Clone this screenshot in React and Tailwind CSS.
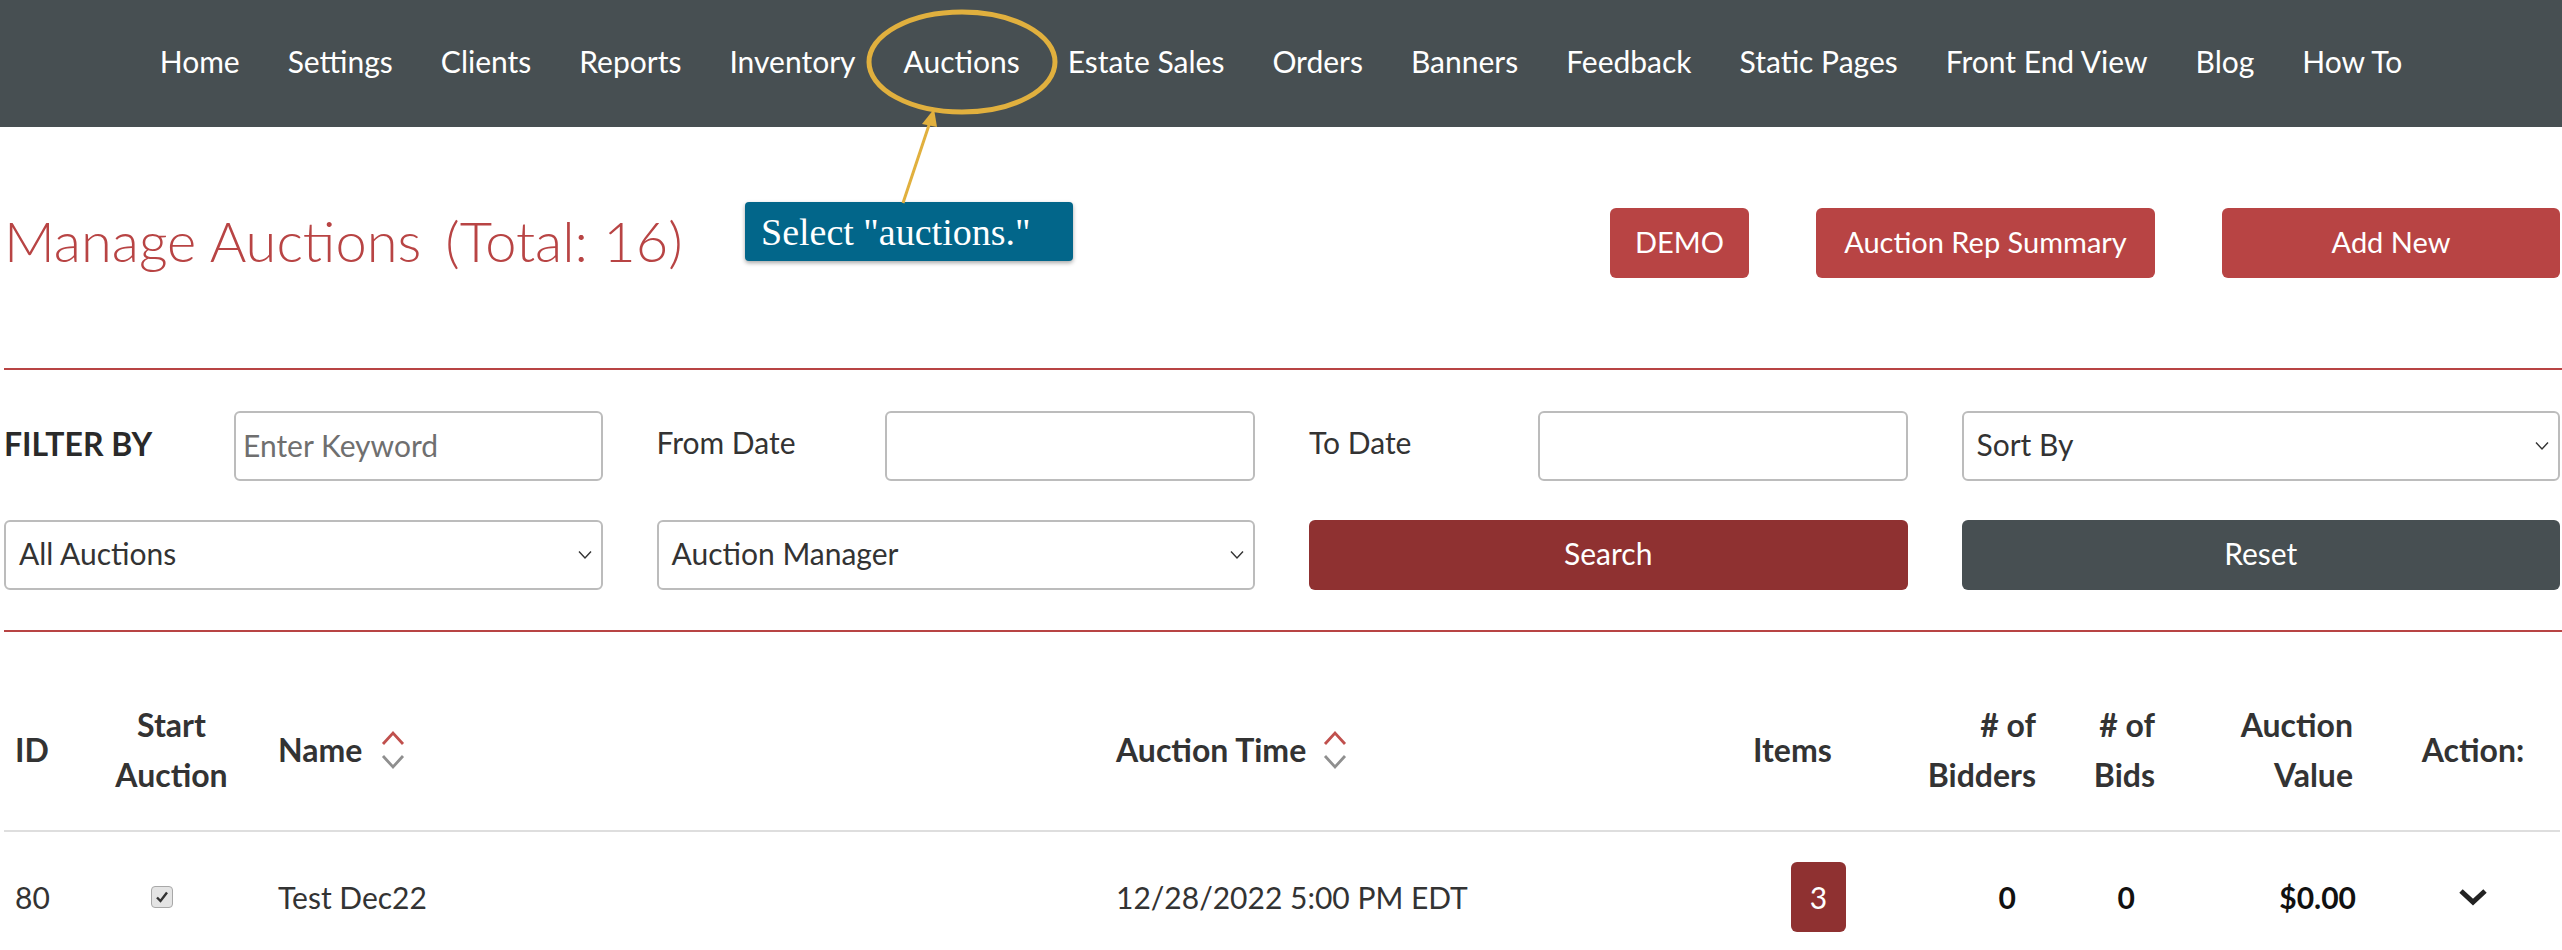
const navItems = [
  'Home', 'Settings', 'Clients', 'Reports', 'Inventory', 'Auctions', 'Estate Sales',
  'Orders', 'Banners', 'Feedback', 'Static Pages', 'Front End View', 'Blog', 'How To',
];

const SortArrows = () => (
  <svg width="28" height="42" viewBox="0 0 28 42" className="shrink-0">
    <polyline points="4,15 14,4 24,15" fill="none" stroke="#c0504d" strokeWidth="2.8" />
    <polyline points="4,27 14,38 24,27" fill="none" stroke="#8f8f8f" strokeWidth="2.8" />
  </svg>
);

const SelectChevron = () => (
  <svg width="14" height="9" viewBox="0 0 14 9" className="absolute right-[9px] top-1/2 -translate-y-1/2 pointer-events-none">
    <polyline points="1,1 7,7.5 13,1" fill="none" stroke="#333" strokeWidth="1.4" />
  </svg>
);

const FakeSelect = ({ label }) => (
  <div className="relative h-[70px] w-full rounded-[6px] border-2 border-[#bcbcbc] bg-white flex items-center pl-[13px] pb-[3px] text-[30px] text-[#333]">
    {label}
    <SelectChevron />
  </div>
);

const TextBox = ({ placeholder }) => (
  <input
    type="text"
    placeholder={placeholder}
    className="h-[70px] flex-1 min-w-0 rounded-[6px] border-2 border-[#bcbcbc] bg-white px-[7px] pb-[3px] text-[30px] text-[#333] placeholder:text-[#6f6f6f] outline-none"
  />
);

export default function App() {
  return (
    <div className="relative min-h-screen bg-white font-[Lato,sans-serif] text-[#333] overflow-hidden">
      {/* top navigation */}
      <nav className="h-[127px] pb-[5px] bg-[#474f52] flex items-center justify-center gap-[48px] text-white text-[30px]">
        {navItems.map((item) => (
          <span key={item}>{item}</span>
        ))}
      </nav>

      <div className="pl-[4px] pr-[2px]">
        {/* title row */}
        <div className="relative flex items-center pt-[81px] pb-[90px]">
          <h1 className="flex-1 font-light text-[56px] leading-none text-[#b84444] pb-[4px]">
            Manage Auctions<span className="ml-[24px]">(Total: 16)</span>
          </h1>
          <div className="flex items-center gap-[67px]">
            <button className="h-[70px] w-[139px] pb-[3px] rounded-[6px] bg-[#b84444] text-white text-[29px]">DEMO</button>
            <button className="h-[70px] w-[339px] pb-[3px] rounded-[6px] bg-[#b84444] text-white text-[29px]">Auction Rep Summary</button>
            <button className="h-[70px] w-[338px] pb-[3px] rounded-[6px] bg-[#b84444] text-white text-[29px]">Add New</button>
          </div>

          {/* tutorial callout */}
          <div className="absolute left-[741px] top-[75px] h-[59px] w-[328px] rounded-[4px] bg-[#02668a] shadow-[0_2px_4px_rgba(0,0,0,0.35)] flex items-center pl-[16px] text-white text-[38px] font-['Liberation_Serif',serif] leading-none">
            Select "auctions."
          </div>
        </div>

        <div className="h-[2px] bg-[#b84444] -mr-[2px]" />

        {/* filters */}
        <div className="grid grid-cols-4 gap-x-[54px] gap-y-[39px] pt-[41px] pb-[40px]">
          <div className="flex items-center">
            <span className="w-[230px] shrink-0 pb-[5px] font-bold text-[32px] text-[#2a2a2a]">FILTER BY</span>
            <TextBox placeholder="Enter Keyword" />
          </div>
          <div className="flex items-center">
            <span className="w-[228px] shrink-0 pb-[7px] text-[30px] text-[#333]">From Date</span>
            <TextBox placeholder="" />
          </div>
          <div className="flex items-center">
            <span className="w-[229px] shrink-0 pb-[7px] text-[30px] text-[#333]">To Date</span>
            <TextBox placeholder="" />
          </div>
          <FakeSelect label="Sort By" />

          <FakeSelect label="All Auctions" />
          <FakeSelect label="Auction Manager" />
          <button className="h-[70px] pb-[3px] rounded-[6px] bg-[#8f3131] text-white text-[30px]">Search</button>
          <button className="h-[70px] pb-[3px] rounded-[6px] bg-[#474f52] text-white text-[30px]">Reset</button>
        </div>

        <div className="h-[2px] bg-[#b84444] -mr-[2px]" />

        {/* auctions table */}
        <div className="mt-[38px]">
          <div className="grid grid-cols-[100px_135px_865px_636px_130px_180px_120px_216px_174px] items-center py-[30px] border-b-2 border-[#dedede] font-bold text-[32px] leading-[50px] text-[#333]">
            <div className="pl-[11px]">ID</div>
            <div className="text-center">Start<br />Auction</div>
            <div className="pl-[39px] flex items-center gap-[17px]">Name <SortArrows /></div>
            <div className="pl-[12px] flex items-center gap-[15px]">Auction Time <SortArrows /></div>
            <div className="pl-[13px]">Items</div>
            <div className="text-right pr-[14px]"># of<br />Bidders</div>
            <div className="text-right pr-[15px]"># of<br />Bids</div>
            <div className="text-right pr-[33px]">Auction<br />Value</div>
            <div className="text-center">Action:</div>
          </div>

          <div className="grid grid-cols-[100px_135px_865px_636px_130px_180px_120px_216px_174px] items-center py-[30px] text-[30px] text-[#333]">
            <div className="pl-[11px]">80</div>
            <div className="flex justify-center pr-[20px]">
              <span className="w-[22px] h-[22px] rounded-[4px] border border-[#a8a8a8] bg-[#e4e4e4] flex items-center justify-center">
                <svg width="14" height="14" viewBox="0 0 14 14">
                  <polyline points="2,7.5 5.5,11 12,2.5" fill="none" stroke="#333" strokeWidth="2.4" />
                </svg>
              </span>
            </div>
            <div className="pl-[39px]">Test Dec22</div>
            <div className="pl-[12px]">12/28/2022 5:00 PM EDT</div>
            <div className="pl-[51px]">
              <span className="h-[70px] w-[55px] rounded-[6px] bg-[#8f3131] text-white flex items-center justify-center">3</span>
            </div>
            <div className="text-right pr-[34px] font-bold text-[#111]">0</div>
            <div className="text-right pr-[35px] font-bold text-[#111]">0</div>
            <div className="text-right pr-[30px] font-bold text-[#111]">$0.00</div>
            <div className="flex justify-center">
              <svg width="30" height="20" viewBox="0 0 30 20">
                <polyline points="3,4 15,15 27,4" fill="none" stroke="#222" strokeWidth="5" />
              </svg>
            </div>
          </div>
        </div>
      </div>

      {/* annotation overlay */}
      <svg className="absolute left-0 top-0 pointer-events-none" width="2562" height="260" viewBox="0 0 2562 260">
        <ellipse cx="962" cy="62" rx="93" ry="50" fill="none" stroke="#e1b03e" strokeWidth="5" />
        <line x1="903" y1="203" x2="930" y2="122" stroke="#e1b03e" strokeWidth="3" />
        <polygon points="934,109 922,124 937,127" fill="#e1b03e" />
      </svg>
    </div>
  );
}
